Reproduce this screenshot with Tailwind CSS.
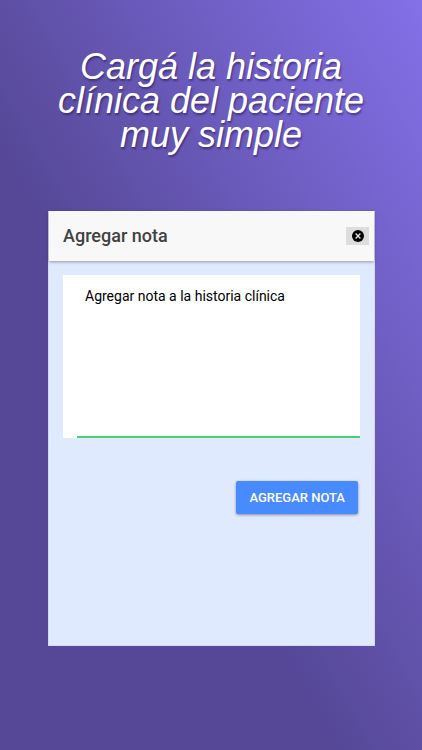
<!DOCTYPE html>
<html lang="es">
<head>
<meta charset="utf-8">
<meta name="viewport" content="width=device-width, initial-scale=1">
<title>Agregar nota</title>
<script src="https://cdn.jsdelivr.net/npm/@tailwindcss/browser@4"></script>
</head>
<body class="min-h-screen bg-linear-to-tr from-[#564897] from-40% via-[#7160c6] via-75% to-[#8470e8] px-12 pt-[50px] pb-[104px] flex flex-col font-['Roboto',sans-serif]">
  <h1 class="-mx-6 text-center font-['Liberation_Sans',sans-serif] text-4xl leading-[34px] italic text-white text-shadow-[1px_2px_2px_rgb(40_25_100/0.6)]">Cargá la historia<br>clínica del paciente<br>muy simple</h1>
  <main class="mt-[59px] -mr-px flex grow flex-col border border-t-0 border-[#d3d9f3] bg-[#e0eafe]">
    <header class="flex h-[50px] items-center justify-between bg-[#f8f8f8] pr-[5px] pl-[14px] shadow-[0_1px_3px_rgb(0_0_0/0.35)]">
      <h2 class="text-lg font-medium text-[#424242]">Agregar nota</h2>
      <button type="button" aria-label="Cerrar" class="flex h-[18px] w-[23px] items-center justify-center bg-[#dddddd]">
        <svg class="size-3" viewBox="0 0 12 12" aria-hidden="true"><circle cx="6" cy="6" r="6" fill="#000"/><path d="M3.6 3.6l4.8 4.8M8.4 3.6l-4.8 4.8" stroke="#ddd" stroke-width="1.4"/></svg>
      </button>
    </header>
    <form class="flex flex-col px-[14px] pt-[14px]">
      <div class="flex bg-white pl-[14px]">
        <textarea aria-label="Nota" placeholder="Agregar nota a la historia clínica" class="h-[163px] w-full resize-none border-b-2 border-[#4ccf70] px-2 py-[11px] text-sm leading-5 text-black outline-none placeholder:text-black"></textarea>
      </div>
      <button type="submit" class="mt-[43px] mr-0.5 h-[33px] self-end rounded-xs bg-[#488aff] px-[13px] text-[13px] font-medium text-white shadow-[0_1px_3px_rgb(0_0_0/0.4)]">AGREGAR NOTA</button>
    </form>
  </main>
</body>
</html>
